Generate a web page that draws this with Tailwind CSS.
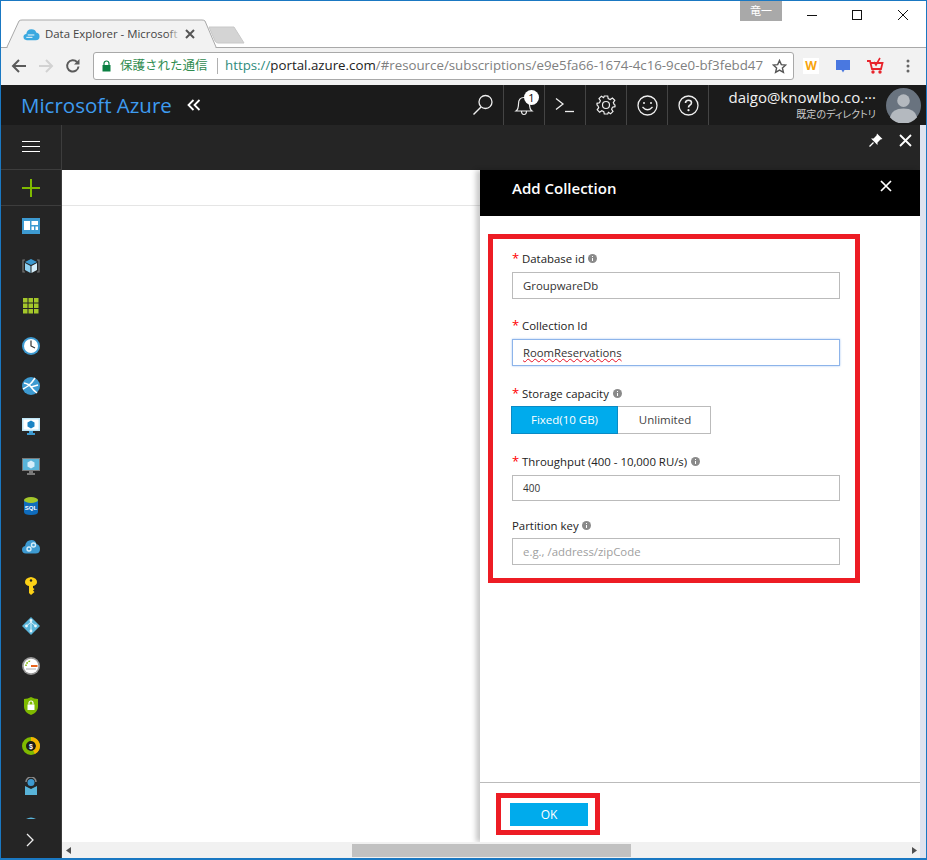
<!DOCTYPE html>
<html lang="ja">
<head>
  <meta charset="UTF-8" />
  <title>Data Explorer - Microsoft Azure</title>
  <script src="https://cdn.jsdelivr.net/npm/@tailwindcss/browser@4"></script>
</head>
<body class="bg-white overflow-hidden font-['Open_Sans','Noto_Sans_CJK_JP',sans-serif]">
  <div class="relative w-[927px] h-[860px] flex flex-col border border-b-2 border-[#1a78c2]">

    <!-- window title bar with tab -->
    <div class="relative h-[47px] shrink-0 bg-white">
      <div class="absolute left-0 right-0 top-[46px] h-px bg-[#a9a9a9]"></div>
      <svg class="absolute left-[4px] top-[18px]" width="212" height="29" viewBox="0 0 212 29">
        <path d="M2 28 L14 2 Q15 1 17 1 L197 1 Q199 1 200 2 L211 28" fill="#f2f2f2" stroke="#a9a9a9" stroke-width="1" />
        <path d="M2.500 28.500 H210.500" stroke="#f2f2f2" stroke-width="1" />
      </svg>
      <svg class="absolute left-[206px] top-[25px]" width="40" height="19" viewBox="0 0 40 19">
        <path d="M2 1 L27 1 L37 17 L11 17 Q9 17 8 15 Z" fill="#d4d4d4" stroke="#c8c8c8" />
      </svg>
      <div class="absolute left-[22px] top-[24px] flex items-center">
        <svg width="17" height="13" viewBox="0 0 18 13">
          <path d="M4 12.500 Q0.500 12.500 0.500 9 Q0.500 6.500 3.500 6 Q4 1 9 1 Q13 1 14 4.500 Q17.500 5 17.500 8.500 Q17.500 12.500 13.500 12.500 Z" fill="#3aa9e0" />
          <path d="M5 7 H12 M3.500 9.500 H10" stroke="#fff" stroke-width="1" />
        </svg>
        <div class="relative ml-[5px] w-[136px] h-[18px] whitespace-nowrap text-[11.400px] leading-[18px] text-[#444]">
          Data Explorer - Microsoft
          <span class="absolute right-0 top-0 h-full w-[14px] bg-linear-to-r from-transparent to-[#f2f2f2]"></span>
        </div>
      </div>
      <svg class="absolute left-[184px] top-[28px]" width="10" height="10" viewBox="0 0 10 10"><path d="M1 1 L9 9 M9 1 L1 9" stroke="#555" stroke-width="2" /></svg>

      <div class="absolute left-[739px] top-0 w-[42px] h-[20px] bg-[#a9a9a9] text-white text-[11px] leading-[20px] text-center">竜一</div>
      <svg class="absolute left-[805px] top-[9px]" width="110" height="12" viewBox="0 0 110 12">
        <path d="M1 5.500 H11" stroke="#111" stroke-width="1" />
        <rect x="46.500" y="0.500" width="9" height="9" fill="none" stroke="#111" stroke-width="1" />
        <path d="M92 0 L102 10 M102 0 L92 10" stroke="#111" stroke-width="1" />
      </svg>
    </div>

    <!-- address bar -->
    <div class="h-[37px] shrink-0 bg-[#f2f2f2] flex items-center pb-px">
      <svg class="ml-[10px]" width="16" height="16" viewBox="0 0 16 16"><path d="M15 8 H2 M8 2 L2 8 L8 14" fill="none" stroke="#5a5a5a" stroke-width="2" /></svg>
      <svg class="ml-[11px]" width="16" height="16" viewBox="0 0 16 16"><path d="M1 8 H14 M8 2 L14 8 L8 14" fill="none" stroke="#d2d2d2" stroke-width="2" /></svg>
      <svg class="ml-[11px]" width="16" height="16" viewBox="0 0 16 16"><path d="M13.500 8.500 A5.700 5.700 0 1 1 12 4" fill="none" stroke="#5a5a5a" stroke-width="2" /><path d="M14.500 1 V6.500 H9 Z" fill="#5a5a5a" /></svg>
      <div class="ml-[12px] w-[701px] h-[28px] bg-white border border-[#a9a9a9] rounded-[3px] flex items-center overflow-hidden">
        <svg class="ml-[8px] shrink-0" width="9" height="12" viewBox="0 0 9 12"><path d="M2 5 V3.500 A2.500 2.500 0 0 1 7 3.500 V5" fill="none" stroke="#0b8043" stroke-width="1.200" /><rect x="0.500" y="5" width="8" height="6.500" fill="#0b8043" /></svg>
        <span class="ml-[9px] shrink-0 w-[87px] text-[12.500px] text-[#2f8c4f] whitespace-nowrap">保護された通信</span>
        <span class="ml-[10px] shrink-0 w-px h-[16px] bg-[#b0b0b0]"></span>
        <div class="ml-[7px] w-[540px] shrink-0 whitespace-nowrap text-[13.300px]"><span class="text-[#2f8c7c]">https://</span><span class="text-[#222]">portal.azure.com</span><span class="text-[#808080]">/#resource/subscriptions/e9e5fa66-1674-4c16-9ce0-bf3febd47</span></div>
        <svg class="ml-[7px] shrink-0" width="15" height="15" viewBox="0 0 15 15"><path d="M7.500 1.500 L9.300 5.600 L13.800 6 L10.400 9 L11.400 13.400 L7.500 11.100 L3.600 13.400 L4.600 9 L1.200 6 L5.700 5.600 Z" fill="none" stroke="#555" stroke-width="1.400" /></svg>
      </div>
      <div class="ml-[9px] w-[16px] h-[16px] bg-white text-[#f7a30b] text-[12px] font-bold leading-[16px] text-center">W</div>
      <svg class="ml-[16px]" width="16" height="15" viewBox="0 0 16 15"><path d="M1 1 H15 V11 H9.500 L8 13.500 L6.500 11 H1 Z" fill="#4a78e0" /></svg>
      <svg class="ml-[15px]" width="18" height="18" viewBox="0 0 18 18"><path d="M1 4 H4 L6 12 H15 L16.500 6 H5" fill="none" stroke="#e8242c" stroke-width="1.800" /><path d="M8 5 L10 8 L14 1" fill="none" stroke="#e8242c" stroke-width="1.600" /><circle cx="7" cy="15" r="1.700" fill="#e8242c" /><circle cx="14" cy="15" r="1.700" fill="#e8242c" /></svg>
      <svg class="ml-[22px]" width="4" height="14" viewBox="0 0 4 14"><circle cx="2" cy="2" r="1.500" fill="#666" /><circle cx="2" cy="7" r="1.500" fill="#666" /><circle cx="2" cy="12" r="1.500" fill="#666" /></svg>
    </div>

    <!-- azure top bar -->
    <div class="h-[40px] shrink-0 bg-[#1b1b1b] flex items-center">
      <div class="ml-[20px] text-[20.500px] text-[#3e9cf0] leading-none">Microsoft Azure</div>
      <svg class="ml-[15px]" width="14" height="12" viewBox="0 0 14 12"><path d="M6.500 1 L1.500 6 L6.500 11 M12.500 1 L7.500 6 L12.500 11" fill="none" stroke="#fff" stroke-width="1.800" /></svg>
      <div class="ml-auto flex items-center h-full">
        <div class="w-[41px] h-full border-r border-[#444] flex items-center justify-center">
          <svg width="22" height="22" viewBox="0 0 22 22"><circle cx="13.500" cy="8" r="6.500" fill="none" stroke="#eee" stroke-width="1.300" /><path d="M9 13 L1.500 20.500" stroke="#eee" stroke-width="1.500" /></svg>
        </div>
        <div class="relative w-[41px] h-full border-r border-[#444] flex items-center justify-center">
          <svg width="22" height="24" viewBox="0 0 22 24"><path d="M3 18 Q5.500 16 5.500 11 Q5.500 4.500 11 4.500 Q16.500 4.500 16.500 11 Q16.500 16 19 18 Z M8.500 18 Q8.500 21.500 11 21.500 Q13.500 21.500 13.500 18" fill="none" stroke="#eee" stroke-width="1.200" /></svg>
          <span class="absolute left-[20px] top-[5px] w-[15px] h-[15px] rounded-full bg-white text-black text-[11px] leading-[15px] text-center">1</span>
        </div>
        <div class="w-[41px] h-full border-r border-[#444] flex items-center justify-center">
          <svg width="20" height="16" viewBox="0 0 20 16"><path d="M1 1.500 L8 7 L1 12.500" fill="none" stroke="#eee" stroke-width="1.300" /><path d="M10 14.500 H19" stroke="#eee" stroke-width="1.300" /></svg>
        </div>
        <div class="w-[41px] h-full border-r border-[#444] flex items-center justify-center">
          <svg width="20" height="20" viewBox="0 0 20 20" fill="none" stroke="#eee" stroke-width="1.200"><path d="M8.300 1 H11.700 L12.200 3.600 L14.200 4.500 L16.400 3 L18.800 5.400 L17.300 7.600 L18.200 9.600 L19 10 V11.700 L16.500 12.200 L15.600 14.200 L17 16.400 L14.600 18.800 L12.400 17.300 L11.700 19 H8.300 L7.800 16.600 L5.800 15.700 L3.600 17.200 L1.200 14.800 L2.700 12.600 L1.800 10.600 L1 10 V8.300 L3.500 7.800 L4.400 5.800 L3 3.600 L5.400 1.200 L7.600 2.700 Z" /><circle cx="10" cy="10" r="3.500" /></svg>
        </div>
        <div class="w-[41px] h-full border-r border-[#444] flex items-center justify-center">
          <svg width="21" height="21" viewBox="0 0 21 21" fill="none" stroke="#eee" stroke-width="1.300"><circle cx="10.500" cy="10.500" r="9.500" /><path d="M5.500 12 Q10.500 17.500 15.500 12" /><circle cx="7" cy="8" r="1" fill="#eee" stroke="none" /><circle cx="14" cy="8" r="1" fill="#eee" stroke="none" /></svg>
        </div>
        <div class="w-[41px] h-full border-r border-[#444] flex items-center justify-center">
          <svg width="21" height="21" viewBox="0 0 21 21" fill="none" stroke="#eee" stroke-width="1.300"><circle cx="10.500" cy="10.500" r="9.500" /><path d="M7.500 8 Q7.500 5.200 10.500 5.200 Q13.500 5.200 13.500 7.800 Q13.500 9.300 11.800 10.200 Q10.500 10.900 10.500 12.500" stroke-width="1.600" /><circle cx="10.500" cy="15.200" r="1.100" fill="#eee" stroke="none" /></svg>
        </div>
        <div class="w-[167px] flex flex-col items-end leading-none">
          <div class="text-[15px] text-[#f2f2f2] leading-[17px]">daigo@knowlbo.co.···</div>
          <div class="text-[10px] text-[#ccc] leading-[15px] mt-[1px] [font-feature-settings:'palt']">既定のディレクトリ</div>
        </div>
        <svg class="ml-[10px] mr-[5px]" width="35" height="35" viewBox="0 0 36 36"><circle cx="18" cy="18" r="18" fill="#69737f" /><circle cx="18" cy="13" r="6.500" fill="#b4b9bf" /><path d="M4 30 Q6 21 18 21 Q30 21 32 30 A18 18 0 0 1 4 30 Z" fill="#b4b9bf" /></svg>
      </div>
    </div>

    <!-- portal body -->
    <div class="flex-1 min-h-0 flex">
      <!-- left nav -->
      <div class="w-[61px] shrink-0 bg-[#252525] border-r border-[#3d3d3d] flex flex-col relative overflow-hidden">
        <div class="h-[45px] shrink-0 border-b border-[#3d3d3d] flex items-center justify-center pb-px">
          <svg width="18" height="11" viewBox="0 0 18 11"><path d="M0 0.500 H18 M0 5.500 H18 M0 10.500 H18" stroke="#fff" stroke-width="1" /></svg>
        </div>
        <div class="h-[36px] shrink-0 border-b border-[#3d3d3d] flex items-center justify-center">
          <svg width="18" height="18" viewBox="0 0 18 18"><path d="M9 0 V18 M0 9 H18" stroke="#7fba00" stroke-width="2" /></svg>
        </div>
        <div class="flex flex-col overflow-hidden h-[613px]">
          <div class="h-[40px] shrink-0 flex items-center justify-center">
            <svg width="18" height="16" viewBox="0 0 18 16"><rect width="18" height="16" fill="#3d9ad1" /><path d="M2 3 H8 V12 H2 Z M9.500 3 H16 V7 H9.500 Z M9.500 8.500 H12 V12 H9.500 Z M13.500 8.500 H16 V12 H13.500 Z" fill="#fff" /></svg>
          </div>
          <div class="h-[40px] shrink-0 flex items-center justify-center">
            <svg width="18" height="16" viewBox="0 0 18 16"><path d="M3 2 H1 V14 H3 M15 2 H17 V14 H15" fill="none" stroke="#777" stroke-width="1.200" /><path d="M9 1 L15 4 L9 7 L3 4 Z" fill="#3d9ad1" /><path d="M3 5 L8.500 8 V15 L3 12 Z" fill="#8fd0f0" /><path d="M15 5 L9.500 8 V15 L15 12 Z" fill="#d5eefa" /></svg>
          </div>
          <div class="h-[40px] shrink-0 flex items-center justify-center">
            <svg width="16" height="16" viewBox="0 0 16 16" fill="#a4c72a"><rect width="4.500" height="4.500" /><rect x="5.500" width="4.500" height="4.500" /><rect x="11" width="4.500" height="4.500" /><rect y="5.500" width="4.500" height="4.500" /><rect x="5.500" y="5.500" width="4.500" height="4.500" /><rect x="11" y="5.500" width="4.500" height="4.500" /><rect y="11" width="4.500" height="4.500" /><rect x="5.500" y="11" width="4.500" height="4.500" /><rect x="11" y="11" width="4.500" height="4.500" /></svg>
          </div>
          <div class="h-[40px] shrink-0 flex items-center justify-center">
            <svg width="18" height="18" viewBox="0 0 18 18"><circle cx="9" cy="9" r="9" fill="#3d9ad1" /><circle cx="9" cy="9" r="7" fill="#fff" /><path d="M9 3.500 V9 L13 11" fill="none" stroke="#333" stroke-width="1.200" /></svg>
          </div>
          <div class="h-[40px] shrink-0 flex items-center justify-center">
            <svg width="18" height="18" viewBox="0 0 18 18"><circle cx="9" cy="9" r="9" fill="#3d9ad1" /><path d="M2 6 Q7 7 9 10 Q11 13 15 16 M13 1 Q10 6 6 9 Q3 11 1 12 M9 10 L16 8" fill="none" stroke="#fff" stroke-width="1.500" /></svg>
          </div>
          <div class="h-[40px] shrink-0 flex items-center justify-center">
            <svg width="18" height="17" viewBox="0 0 18 17"><rect width="18" height="13" fill="#bfe6f7" /><rect x="1.500" y="1.500" width="15" height="10" fill="#fff" /><path d="M9 2.500 L12.500 4.500 V8.500 L9 10.500 L5.500 8.500 V4.500 Z" fill="#1b84c4" /><path d="M7 13 H11 V15 H13 V17 H5 V15 H7 Z" fill="#3d9ad1" /></svg>
          </div>
          <div class="h-[40px] shrink-0 flex items-center justify-center">
            <svg width="18" height="17" viewBox="0 0 18 17"><rect width="18" height="13" fill="#7a7a7a" /><rect x="1" y="1" width="16" height="11" fill="#59b4d9" /><path d="M9 2.500 L12.500 4.500 V8.500 L9 10.500 L5.500 8.500 V4.500 Z" fill="#d5eefa" /><path d="M7 13 H11 V15 H13 V17 H5 V15 H7 Z" fill="#7a7a7a" /></svg>
          </div>
          <div class="h-[40px] shrink-0 flex items-center justify-center">
            <svg width="14" height="18" viewBox="0 0 14 18"><path d="M0 3 V15 Q0 18 7 18 Q14 18 14 15 V3 Z" fill="#0f6cbd" /><ellipse cx="7" cy="3" rx="7" ry="3" fill="#a4c72a" /><text x="7" y="13" text-anchor="middle" fill="#fff" font-size="6" font-weight="700" font-family="Liberation Sans">SQL</text></svg>
          </div>
          <div class="h-[40px] shrink-0 flex items-center justify-center">
            <svg width="18" height="15" viewBox="0 0 18 15"><path d="M4 14.500 Q0 14.500 0 10.500 Q0 7.500 3 7 Q4 1 9.500 1 Q13.500 1 14.500 5 Q18 6 18 10 Q18 14.500 13.500 14.500 Z" fill="#3d9ad1" /><circle cx="7" cy="10" r="2" fill="none" stroke="#d5eefa" stroke-width="1.400" /><circle cx="11.500" cy="6" r="2" fill="none" stroke="#d5eefa" stroke-width="1.400" /></svg>
          </div>
          <div class="h-[40px] shrink-0 flex items-center justify-center">
            <svg width="12" height="18" viewBox="0 0 12 18"><path d="M6 0 Q12 1 12 5 Q12 8 8 9 V11 L9.500 12 L8 13.500 L9.500 15 L6 18 L4 16 V9 Q0 8 0 5 Q0 1 6 0 Z" fill="#fcd116" /><circle cx="6" cy="3.500" r="1.200" fill="#252525" /></svg>
          </div>
          <div class="h-[40px] shrink-0 flex items-center justify-center">
            <svg width="18" height="18" viewBox="0 0 18 18"><path d="M9 0 L18 9 L9 18 L0 9 Z" fill="#59b4d9" /><path d="M9 3 V14 M4.500 9 L9 5 L13.500 9" fill="none" stroke="#d5eefa" stroke-width="1" /><circle cx="9" cy="3.500" r="1.400" fill="#e8f6fc" /><circle cx="4.500" cy="9" r="1.400" fill="#e8f6fc" /><circle cx="13.500" cy="9" r="1.400" fill="#e8f6fc" /><circle cx="9" cy="14" r="1.400" fill="#e8f6fc" /></svg>
          </div>
          <div class="h-[40px] shrink-0 flex items-center justify-center">
            <svg width="18" height="18" viewBox="0 0 18 18"><circle cx="9" cy="9" r="9" fill="#9a9a9a" /><circle cx="9" cy="9" r="7.300" fill="#fff" /><path d="M4 9 A5 5 0 0 1 9 4" fill="none" stroke="#7fba00" stroke-width="1.500" stroke-dasharray="1.500 1" /><path d="M9 9 H15.500" stroke="#e8641c" stroke-width="2" /><path d="M4 12 H14" stroke="#aaa" stroke-width="1" /></svg>
          </div>
          <div class="h-[40px] shrink-0 flex items-center justify-center">
            <svg width="14" height="18" viewBox="0 0 14 18"><path d="M7 0 Q10 2 14 2 V10 Q14 15 7 18 Q0 15 0 10 V2 Q4 2 7 0 Z" fill="#7fba00" /><rect x="3.500" y="7.500" width="7" height="5.500" fill="#fff" /><path d="M5 7.500 V6 A2 2 0 0 1 9 6 V7.500" fill="none" stroke="#fff" stroke-width="1.200" /></svg>
          </div>
          <div class="h-[40px] shrink-0 flex items-center justify-center">
            <svg width="18" height="18" viewBox="0 0 18 18"><circle cx="9" cy="9" r="7" fill="#1b1b1b" stroke="#7fba00" stroke-width="4" /><path d="M9 2 A7 7 0 0 1 12 15.300" fill="none" stroke="#f4b400" stroke-width="4" /><text x="9" y="12" text-anchor="middle" fill="#fff" font-size="7" font-weight="700" font-family="Liberation Sans">$</text></svg>
          </div>
          <div class="h-[40px] shrink-0 flex items-center justify-center">
            <svg width="14" height="18" viewBox="0 0 14 18"><path d="M2 5 A5 5 0 0 1 12 5" fill="none" stroke="#8a8a8a" stroke-width="1.500" /><circle cx="7" cy="5.500" r="3.500" fill="#3d9ad1" /><path d="M1 9 L7 12 L13 9 V18 H1 Z" fill="#59b4d9" /></svg>
          </div>
          <div class="h-[40px] shrink-0 flex items-start justify-center pt-[11px]">
            <svg width="10" height="2" viewBox="0 0 10 2"><path d="M0 2 Q5 -1 10 2 Z" fill="#59b4d9" /></svg>
          </div>
        </div>
        <div class="flex-1 flex items-center justify-center pt-[3px] pr-[3px]">
          <svg width="8" height="14" viewBox="0 0 8 14"><path d="M1 1 L7 7 L1 13" fill="none" stroke="#eee" stroke-width="1.300" /></svg>
        </div>
      </div>

      <!-- main area -->
      <div class="flex-1 min-w-0 flex flex-col relative">
        <div class="flex-1 min-h-0 flex flex-col">
          <!-- dark blade title strip -->
          <div class="h-[45px] shrink-0 bg-[#252525] flex items-start justify-end mr-[6px]">
            <svg class="mt-[8px] mr-[16px]" width="14" height="14" viewBox="0 0 14 14"><path d="M8 0.500 L13.500 6 L11.500 6.500 L8.500 9.500 L8.500 12 L2 5.500 L4.500 5.500 L7.500 2.500 Z" fill="#fff" /><path d="M4.500 9.500 L0.500 13.500" stroke="#fff" stroke-width="1.200" /></svg>
            <svg class="mt-[9px] mr-[8px]" width="13" height="13" viewBox="0 0 13 13"><path d="M1 1 L12 12 M12 1 L1 12" stroke="#fff" stroke-width="1.800" /></svg>
          </div>
          <div class="flex-1 min-h-0 flex">
            <!-- empty explorer blade -->
            <div class="w-[418px] shrink-0 bg-white">
              <div class="h-[36px] border-b border-[#e5e5e5]"></div>
            </div>
            <!-- add collection blade -->
            <div class="relative w-[440px] shrink-0 bg-white flex flex-col shadow-[-4px_0_5px_rgba(0,0,0,0.22)]">
              <div class="h-[46px] shrink-0 bg-black flex items-start justify-between">
                <div class="ml-[32px] mt-[8px] text-[15px] font-semibold text-white leading-[20px]">Add Collection</div>
                <svg class="mt-[10px] mr-[28px]" width="12" height="12" viewBox="0 0 12 12"><path d="M1 1 L11 11 M11 1 L1 11" stroke="#fff" stroke-width="1.700" /></svg>
              </div>
              <div class="flex-1 min-h-0 pl-[32px] pr-[80px] pt-[35px]">
                <div class="h-[15px] flex items-center text-[11.400px] text-[#222] whitespace-nowrap"><span class="text-[#f00] w-[10px] text-[13px]">*</span>Database id<svg class="ml-[3px]" width="9" height="9" viewBox="0 0 9 9"><circle cx="4.500" cy="4.500" r="4.500" fill="#8a8a8a" /><path d="M4.500 2 V3 M4.500 4 V7" stroke="#fff" /></svg></div>
                <div class="mt-[6px] h-[27px] border border-[#bbb] pl-[10px] text-[11.400px] leading-[25px] text-[#333]">GroupwareDb</div>

                <div class="mt-[19px] h-[15px] flex items-center text-[11.400px] text-[#222] whitespace-nowrap"><span class="text-[#f00] w-[10px] text-[13px]">*</span>Collection Id</div>
                <div class="mt-[6px] h-[27px] border border-[#8db4ea] shadow-[0_0_2px_#a9c8f2] pl-[10px] text-[11.300px] leading-[25px] text-[#333]"><span class="underline decoration-wavy decoration-[#e81123] decoration-1">RoomReservations</span></div>

                <div class="mt-[20px] h-[15px] flex items-center text-[11.400px] text-[#222] whitespace-nowrap"><span class="text-[#f00] w-[10px] text-[13px]">*</span>Storage capacity<svg class="ml-[4px]" width="9" height="9" viewBox="0 0 9 9"><circle cx="4.500" cy="4.500" r="4.500" fill="#8a8a8a" /><path d="M4.500 2 V3 M4.500 4 V7" stroke="#fff" /></svg></div>
                <div class="mt-[5px] -ml-px flex h-[28px] text-[11.500px] leading-[26px] text-center">
                  <div class="w-[107px] bg-[#00abec] border border-[#0a8ac4] text-white">Fixed(10 GB)</div>
                  <div class="w-[93px] pl-[2px] border border-[#bbb] border-l-0 text-[#444]">Unlimited</div>
                </div>

                <div class="mt-[20px] h-[15px] flex items-center text-[11.400px] text-[#222] whitespace-nowrap"><span class="text-[#f00] w-[10px] text-[13px]">*</span>Throughput (400 - 10,000 RU/s)<svg class="ml-[4px]" width="9" height="9" viewBox="0 0 9 9"><circle cx="4.500" cy="4.500" r="4.500" fill="#8a8a8a" /><path d="M4.500 2 V3 M4.500 4 V7" stroke="#fff" /></svg></div>
                <div class="mt-[6px] h-[26px] border border-[#bbb] pl-[10px] text-[10px] leading-[24px] text-[#333]">400</div>

                <div class="mt-[17px] h-[15px] flex items-center text-[11.400px] text-[#222] whitespace-nowrap">Partition key<svg class="ml-[3px]" width="9" height="9" viewBox="0 0 9 9"><circle cx="4.500" cy="4.500" r="4.500" fill="#8a8a8a" /><path d="M4.500 2 V3 M4.500 4 V7" stroke="#fff" /></svg></div>
                <div class="mt-[5px] h-[27px] border border-[#bbb] pl-[10px] text-[11.400px] leading-[25px] text-[#a0a0a0]">e.g., /address/zipCode</div>
              </div>
              <div class="h-[60px] shrink-0 border-t border-[#bbb] pl-[30px] pt-[20px]">
                <div class="w-[78px] h-[23px] bg-[#00abec] text-white text-[12px] leading-[23px] text-center">OK</div>
              </div>
              <!-- red annotation frames -->
              <div class="absolute left-[8px] top-[64px] w-[372px] h-[349px] border-[5px] border-[#ed1c24]"></div>
              <div class="absolute left-[16px] top-[623px] w-[104px] h-[42px] border-[5px] border-[#ed1c24]"></div>
            </div>
          </div>
        </div>
        <!-- horizontal scrollbar -->
        <div class="h-[16px] shrink-0 bg-[#f1f1f1] relative mr-[6px]">
          <svg class="absolute left-[4px] top-[5px]" width="5" height="7" viewBox="0 0 5 7"><path d="M5 0 V7 L0 3.500 Z" fill="#505050" /></svg>
          <div class="absolute left-[290px] top-[2px] w-[279px] h-[13px] bg-[#c1c1c1]"></div>
          <svg class="absolute right-[3px] top-[5px]" width="5" height="7" viewBox="0 0 5 7"><path d="M0 0 V7 L5 3.500 Z" fill="#505050" /></svg>
        </div>
        <!-- strip at the right edge -->
        <div class="absolute right-0 top-0 bottom-0 w-[6px] bg-[#dfe3ee]"></div>
      </div>
    </div>
  </div>
</body>
</html>
